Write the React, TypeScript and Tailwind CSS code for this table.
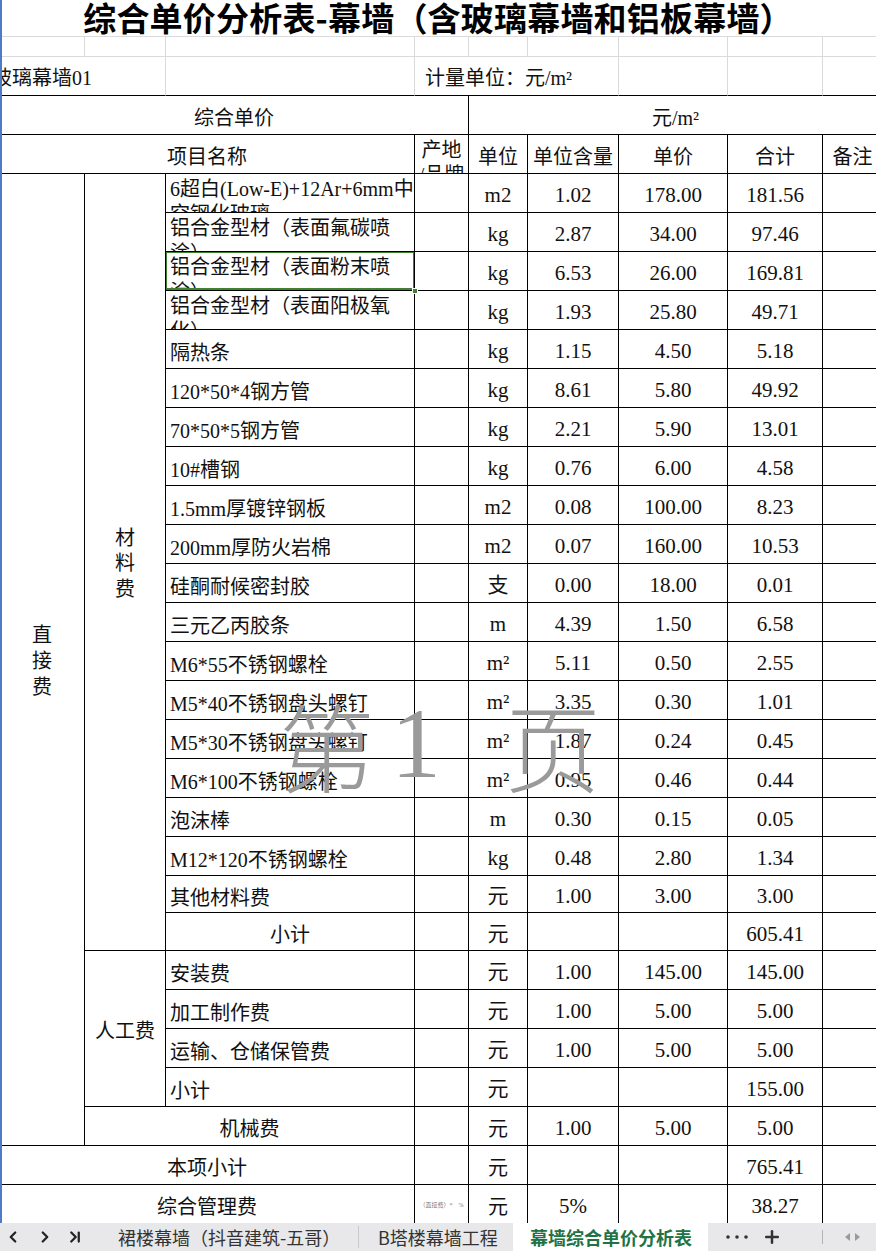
import React from 'react';
import { ChevronLeft, ChevronRight, ChevronLast, Plus } from 'lucide-react';

type Item = {
  name: string | [string, string];
  unit: string;
  qty: string;
  price: string;
  total: string;
  h?: string;
  align?: 'center' | 'left';
  selected?: boolean;
};

const materials: Item[] = [
  { name: ['6超白(Low-E)+12Ar+6mm中', '空钢化玻璃'], unit: 'm2', qty: '1.02', price: '178.00', total: '181.56' },
  { name: ['铝合金型材（表面氟碳喷', '涂）'], unit: 'kg', qty: '2.87', price: '34.00', total: '97.46' },
  { name: ['铝合金型材（表面粉末喷', '涂）'], unit: 'kg', qty: '6.53', price: '26.00', total: '169.81', selected: true },
  { name: ['铝合金型材（表面阳极氧', '化）'], unit: 'kg', qty: '1.93', price: '25.80', total: '49.71' },
  { name: '隔热条', unit: 'kg', qty: '1.15', price: '4.50', total: '5.18' },
  { name: '120*50*4钢方管', unit: 'kg', qty: '8.61', price: '5.80', total: '49.92' },
  { name: '70*50*5钢方管', unit: 'kg', qty: '2.21', price: '5.90', total: '13.01' },
  { name: '10#槽钢', unit: 'kg', qty: '0.76', price: '6.00', total: '4.58' },
  { name: '1.5mm厚镀锌钢板', unit: 'm2', qty: '0.08', price: '100.00', total: '8.23' },
  { name: '200mm厚防火岩棉', unit: 'm2', qty: '0.07', price: '160.00', total: '10.53' },
  { name: '硅酮耐候密封胶', unit: '支', qty: '0.00', price: '18.00', total: '0.01' },
  { name: '三元乙丙胶条', unit: 'm', qty: '4.39', price: '1.50', total: '6.58' },
  { name: 'M6*55不锈钢螺栓', unit: 'm²', qty: '5.11', price: '0.50', total: '2.55' },
  { name: 'M5*40不锈钢盘头螺钉', unit: 'm²', qty: '3.35', price: '0.30', total: '1.01' },
  { name: 'M5*30不锈钢盘头螺钉', unit: 'm²', qty: '1.87', price: '0.24', total: '0.45' },
  { name: 'M6*100不锈钢螺栓', unit: 'm²', qty: '0.95', price: '0.46', total: '0.44' },
  { name: '泡沫棒', unit: 'm', qty: '0.30', price: '0.15', total: '0.05' },
  { name: 'M12*120不锈钢螺栓', unit: 'kg', qty: '0.48', price: '2.80', total: '1.34' },
  { name: '其他材料费', unit: '元', qty: '1.00', price: '3.00', total: '3.00', h: 'h-[37px]' },
  { name: '小计', unit: '元', qty: '', price: '', total: '605.41', h: 'h-[38px]', align: 'center' },
];

const labor: Item[] = [
  { name: '安装费', unit: '元', qty: '1.00', price: '145.00', total: '145.00' },
  { name: '加工制作费', unit: '元', qty: '1.00', price: '5.00', total: '5.00' },
  { name: '运输、仓储保管费', unit: '元', qty: '1.00', price: '5.00', total: '5.00' },
  { name: '小计', unit: '元', qty: '', price: '', total: '155.00' },
];

const cell = 'shrink-0 h-full border-r border-b border-black flex items-center justify-center overflow-hidden whitespace-nowrap';
const num = 'text-[21px]';

function Row({ it }: { it: Item }) {
  const two = Array.isArray(it.name);
  return (
    <div className={`flex ${it.h ?? 'h-[39px]'}`}>
      {two ? (
        <div className="relative shrink-0 w-[249px] h-full border-r border-b border-black overflow-hidden whitespace-nowrap pl-[4px] pt-[3px] leading-[25px]">
          <div>{(it.name as [string, string])[0]}</div>
          <div>{(it.name as [string, string])[1]}</div>
          {it.selected && (
            <div className="absolute left-[-1px] top-[-1px] right-[-1px] bottom-0 border-2 border-[#3f8131]" />
          )}
        </div>
      ) : (
        <div
          className={`shrink-0 w-[249px] h-full border-r border-b border-black flex items-center overflow-hidden whitespace-nowrap pt-[7px] ${
            it.align === 'center' ? 'justify-center' : 'pl-[4px]'
          }`}
        >
          {it.name as string}
        </div>
      )}
      <div className={`${cell} w-[54px]`} />
      <div className={`${cell} w-[59px] ${num} pt-[6px]`}>{it.unit}</div>
      <div className={`${cell} w-[91px] ${num} pt-[6px]`}>{it.qty}</div>
      <div className={`${cell} w-[109px] ${num} pt-[6px]`}>{it.price}</div>
      <div className={`${cell} w-[95px] ${num} pt-[6px]`}>{it.total}</div>
      <div className={`${cell} w-[60px]`} />
    </div>
  );
}

function TabBar() {
  return (
    <div className="h-[28px] shrink-0 flex items-stretch bg-[#e8e8ea] text-[#333] font-[family-name:'Noto_Sans_CJK_SC',sans-serif] text-[18px]">
      <div className="shrink-0 flex items-center w-[100px] pl-[4px] text-[#222]">
        <ChevronLeft size={18} strokeWidth={3} />
        <div className="w-[14px]" />
        <ChevronRight size={18} strokeWidth={3} />
        <div className="w-[12px]" />
        <ChevronLast size={18} strokeWidth={3} />
      </div>
      <div className="shrink-0 flex items-center pl-[18px] w-[258px] whitespace-nowrap">裙楼幕墙（抖音建筑-五哥）</div>
      <div className="shrink-0 w-px bg-[#c9c9cc] my-[3px]" />
      <div className="shrink-0 flex items-center pl-[19px] w-[154px] whitespace-nowrap">B塔楼幕墙工程</div>
      <div className="shrink-0 flex items-center bg-white w-[195px] pl-[17px] font-bold text-[#217346] whitespace-nowrap">幕墙综合单价分析表</div>
      <div className="shrink-0 flex items-center pl-[17px] text-[#333]">
        <svg width="24" height="6" viewBox="0 0 24 6">
          <circle cx="3" cy="3" r="1.8" fill="#333" />
          <circle cx="12" cy="3" r="1.8" fill="#333" />
          <circle cx="21" cy="3" r="1.8" fill="#333" />
        </svg>
        <div className="w-[13px]" />
        <Plus size={20} strokeWidth={3} />
        <div className="w-[40px]" />
        <div className="w-px h-[14px] bg-[#b5b5b8]" />
        <div className="w-[20px]" />
        <svg width="20" height="10" viewBox="0 0 20 10">
          <polygon points="7,1 7,9 2,5" fill="#9a9a9e" />
          <polygon points="12,1 12,9 17,5" fill="#9a9a9e" />
        </svg>
      </div>
    </div>
  );
}

export default function App() {
  return (
    <div className="w-[876px] h-[1251px] overflow-hidden flex flex-col bg-white text-[#111] text-[20px] font-[family-name:'Liberation_Serif','Noto_Sans_CJK_SC',serif]">
      <div className="relative flex-1 overflow-hidden">
        <div className="w-[883px]">
          {/* title */}
          <div className="w-[876px] h-[37px] border-b border-[#dadada] flex items-center justify-center text-[33px] font-bold tracking-[0.2px] whitespace-nowrap font-[family-name:'Noto_Sans_CJK_SC',sans-serif] text-black">
            综合单价分析表-幕墙（含玻璃幕墙和铝板幕墙）
          </div>
          {/* empty grid row */}
          <div className="flex h-[20px]">
            <div className="shrink-0 w-[85px] border-r border-b border-[#dadada]" />
            <div className="shrink-0 w-[81px] border-r border-b border-[#dadada]" />
            <div className="shrink-0 w-[249px] border-r border-b border-[#dadada]" />
            <div className="shrink-0 w-[54px] border-r border-b border-[#dadada]" />
            <div className="shrink-0 w-[59px] border-r border-b border-[#dadada]" />
            <div className="shrink-0 w-[91px] border-r border-b border-[#dadada]" />
            <div className="shrink-0 w-[109px] border-r border-b border-[#dadada]" />
            <div className="shrink-0 w-[95px] border-r border-b border-[#dadada]" />
            <div className="shrink-0 w-[60px] border-r border-b border-[#dadada]" />
          </div>
          {/* info row */}
          <div className="flex h-[39px]">
            <div className="shrink-0 w-[166px] border-r border-[#dadada] border-b-black border-b flex items-center overflow-hidden whitespace-nowrap pt-[4px]">
              <span className="ml-[-8px]">玻璃幕墙01</span>
            </div>
            <div className="shrink-0 w-[249px] border-r border-[#dadada] border-b border-b-black" />
            <div className="shrink-0 w-[204px] border-r border-[#dadada] border-b border-b-black flex items-center pl-[10px] whitespace-nowrap pt-[4px]">
              计量单位：元/m²
            </div>
            <div className="shrink-0 w-[109px] border-r border-[#dadada] border-b border-b-black" />
            <div className="shrink-0 w-[95px] border-r border-[#dadada] border-b border-b-black" />
            <div className="shrink-0 w-[60px] border-r border-[#dadada] border-b border-b-black" />
          </div>
          {/* header 1 */}
          <div className="flex h-[39px]">
            <div className={`${cell} w-[469px] pt-[6px]`}>综合单价</div>
            <div className={`${cell} w-[414px] pt-[6px]`}>元/m²</div>
          </div>
          {/* header 2 */}
          <div className="flex h-[39px]">
            <div className={`${cell} w-[415px] pt-[6px]`}>项目名称</div>
            <div className="shrink-0 w-[54px] h-full border-r border-b border-black overflow-hidden text-center leading-[25px] pt-[3px]">
              <div>产地</div>
              <div>/品牌</div>
            </div>
            <div className={`${cell} w-[59px] pt-[6px]`}>单位</div>
            <div className={`${cell} w-[91px] pt-[6px]`}>单位含量</div>
            <div className={`${cell} w-[109px] pt-[6px]`}>单价</div>
            <div className={`${cell} w-[95px] pt-[6px]`}>合计</div>
            <div className={`${cell} w-[60px] pt-[6px]`}>备注</div>
          </div>
          {/* body */}
          <div className="flex">
            <div className="shrink-0 w-[85px] border-r border-b border-black flex flex-col items-center justify-center leading-[26px] pt-[2px]">
              <span>直</span>
              <span>接</span>
              <span>费</span>
            </div>
            <div className="flex flex-col">
              <div className="flex">
                <div className="shrink-0 w-[81px] border-r border-b border-black flex flex-col items-center justify-center leading-[25.5px] pt-[4px]">
                  <span>材</span>
                  <span>料</span>
                  <span>费</span>
                </div>
                <div className="flex flex-col">
                  {materials.map((it, i) => (
                    <Row key={i} it={it} />
                  ))}
                </div>
              </div>
              <div className="flex">
                <div className="shrink-0 w-[81px] border-r border-b border-black flex items-center justify-center pt-[4px]">
                  人工费
                </div>
                <div className="flex flex-col">
                  {labor.map((it, i) => (
                    <Row key={i} it={it} />
                  ))}
                </div>
              </div>
              <div className="flex h-[39px]">
                <div className={`${cell} w-[330px] pt-[6px]`}>机械费</div>
                <div className={`${cell} w-[54px]`} />
                <div className={`${cell} w-[59px] pt-[6px]`}>元</div>
                <div className={`${cell} w-[91px] ${num} pt-[6px]`}>1.00</div>
                <div className={`${cell} w-[109px] ${num} pt-[6px]`}>5.00</div>
                <div className={`${cell} w-[95px] ${num} pt-[6px]`}>5.00</div>
                <div className={`${cell} w-[60px]`} />
              </div>
            </div>
          </div>
          <div className="flex h-[39px]">
            <div className={`${cell} w-[415px] pt-[6px]`}>本项小计</div>
            <div className={`${cell} w-[54px]`} />
            <div className={`${cell} w-[59px] pt-[6px]`}>元</div>
            <div className={`${cell} w-[91px]`} />
            <div className={`${cell} w-[109px]`} />
            <div className={`${cell} w-[95px] ${num} pt-[6px]`}>765.41</div>
            <div className={`${cell} w-[60px]`} />
          </div>
          <div className="flex h-[39px]">
            <div className={`${cell} w-[415px] pt-[6px]`}>综合管理费</div>
            <div className={`${cell} w-[54px] text-[6px] text-[#777] pt-[2px]`}>（直接费）*　%</div>
            <div className={`${cell} w-[59px] pt-[6px]`}>元</div>
            <div className={`${cell} w-[91px] ${num} pt-[6px]`}>5%</div>
            <div className={`${cell} w-[109px]`} />
            <div className={`${cell} w-[95px] ${num} pt-[6px]`}>38.27</div>
            <div className={`${cell} w-[60px]`} />
          </div>
        </div>

        {/* fill handle of selected cell */}
        <div className="absolute left-[412px] top-[288px] w-[6px] h-[6px] bg-[#3f8131] border border-white" />

        {/* left window edge */}
        <div className="absolute left-0 top-0 bottom-0 w-[2px] bg-[#4d7cc7]" />

        {/* watermark */}
        <div className="absolute left-[279px] top-[694px] flex items-center text-[#9a9a9a] leading-none pointer-events-none">
          <span className="text-[96px] font-[family-name:'Noto_Sans_CJK_SC',sans-serif] font-light">第</span>
          <span className="text-[100px] ml-[16px]">1</span>
          <span className="text-[96px] ml-[64px] font-[family-name:'Noto_Sans_CJK_SC',sans-serif] font-light">页</span>
        </div>
      </div>
      <TabBar />
    </div>
  );
}
